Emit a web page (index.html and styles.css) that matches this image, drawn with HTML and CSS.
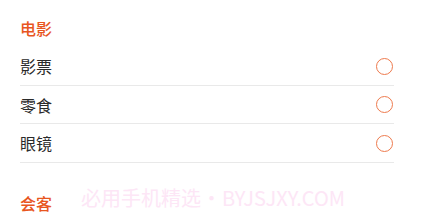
FILE: index.html
```html
<!DOCTYPE html>
<html lang="zh">
<head>
<meta charset="utf-8">
<link rel="stylesheet" href="styles.css">
</head>
<body>
<div class="page">
  <div class="section-title">电影</div>
  <ul class="list">
    <li class="row"><span class="label">影票</span><span class="radio"></span></li>
    <li class="row"><span class="label">零食</span><span class="radio"></span></li>
    <li class="row"><span class="label">眼镜</span><span class="radio"></span></li>
  </ul>
  <div class="section-title second">会客</div>
  <div class="watermark">必用手机精选 • BYJSJXY.COM</div>
</div>
</body>
</html>
```
FILE: styles.css
```css
html, body {
  margin: 0;
  padding: 0;
  background: #fff;
}
.page {
  position: relative;
  width: 421px;
  height: 221px;
  overflow: hidden;
  box-sizing: border-box;
  padding: 17px 27px 0 20px;
  font-family: "Noto Sans CJK SC", "Noto Sans", sans-serif;
}
.section-title {
  font-size: 16px;
  line-height: 22px;
  color: #e8561f;
  font-weight: 500;
}
.section-title.second {
  margin-top: 29px;
}
.list {
  list-style: none;
  margin: 8px 0 0 0;
  padding: 0;
}
.row {
  display: flex;
  align-items: center;
  justify-content: space-between;
  height: 38.5px;
  box-sizing: border-box;
  border-bottom: 1px solid #e9e9e9;
  padding-top: 1px;
}
.label {
  font-size: 16px;
  color: #2a2a2a;
}
.radio {
  width: 17px;
  height: 17px;
  box-sizing: border-box;
  border: 1.5px solid #ee7a4d;
  border-radius: 50%;
  margin-right: 1px;
}
.watermark {
  position: absolute;
  left: 81px;
  top: 185px;
  font-size: 20px;
  line-height: 26px;
  color: #fde6f6;
  white-space: nowrap;
  word-spacing: -4px;
}
```
